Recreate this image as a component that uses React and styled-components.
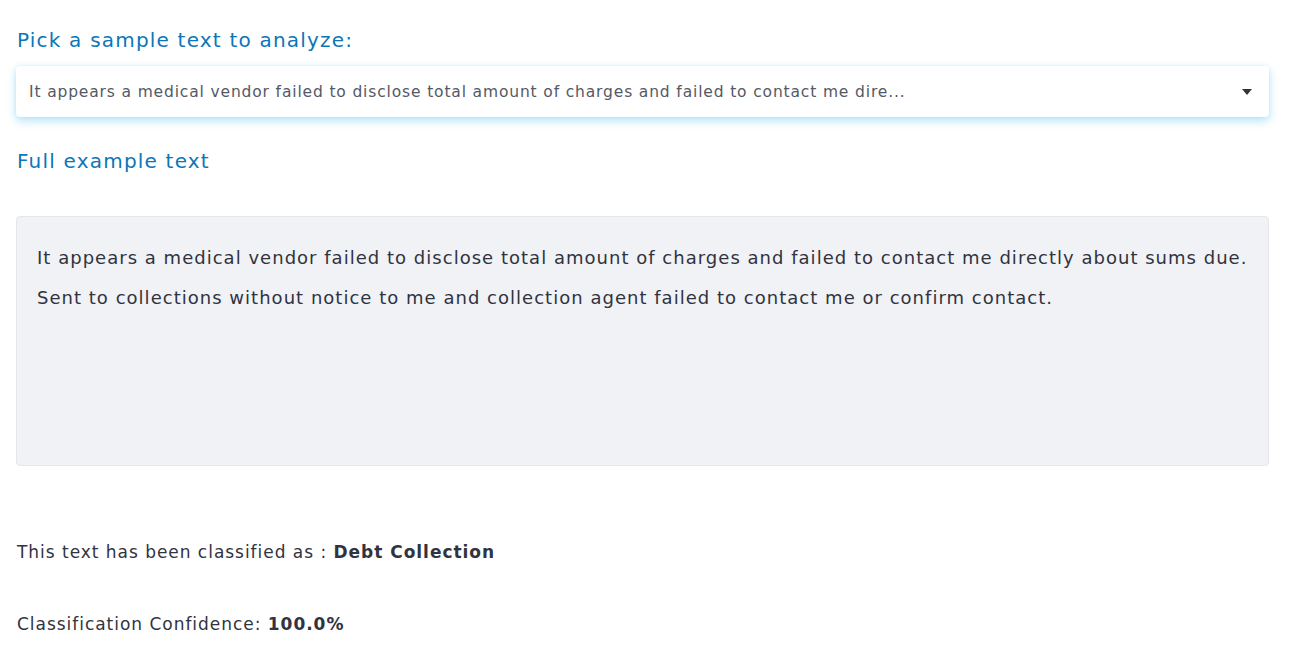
import React from "react";
import styled, { createGlobalStyle } from "styled-components";

const Global = createGlobalStyle`
  html, body { margin: 0; padding: 0; background: #ffffff; }
  body { font-family: "DejaVu Sans", "Noto Sans", sans-serif; color: #31333f; }
`;

const Page = styled.main`
  display: flex;
  flex-direction: column;
  padding: 26px 37px 0 16px;
`;

const Heading = styled.h3`
  margin: 0 0 0 1px;
  font-size: 20px;
  font-weight: 400;
  letter-spacing: 1.2px;
  line-height: 28px;
  color: #0b76b8;
`;

const SelectBox = styled.div`
  margin-top: 12px;
  height: 51px;
  display: flex;
  align-items: center;
  justify-content: space-between;
  padding: 0 17px 0 13px;
  background: #ffffff;
  border-radius: 4px;
  box-shadow: 0 4px 10px rgba(30, 170, 235, 0.32), 0 0 4px rgba(30, 170, 235, 0.12);
  box-sizing: border-box;
`;

const SelectValue = styled.span`
  font-size: 15.5px;
  letter-spacing: 0.85px;
  color: #555966;
  white-space: nowrap;
`;

const Caret = styled.svg`
  width: 10px;
  height: 6px;
  flex: none;
`;

const SubHeading = styled(Heading)`
  margin-top: 30px;
`;

const TextPanel = styled.div`
  margin-top: 41px;
  height: 250px;
  box-sizing: border-box;
  padding: 21px 20px 0 20px;
  background: #f0f2f6;
  border: 1px solid #e4e6eb;
  border-radius: 4px;
  font-size: 18px;
  letter-spacing: 1.02px;
  line-height: 40px;
  color: #31333f;
`;

const Line = styled.p`
  margin: 0;
  white-space: nowrap;
`;

const Result = styled.p`
  margin: ${(p) => p.$top}px 0 0 1px;
  font-size: 17px;
  letter-spacing: 0.97px;
  line-height: 24px;
  color: #31333f;
`;

export default function App() {
  return (
    <>
      <Global />
      <Page>
        <Heading>Pick a sample text to analyze:</Heading>
        <SelectBox>
          <SelectValue>
            It appears a medical vendor failed to disclose total amount of charges and failed to contact me dire...
          </SelectValue>
          <Caret viewBox="0 0 10 6">
            <path d="M0 0 L10 0 L5 6 Z" fill="#31333f" />
          </Caret>
        </SelectBox>
        <SubHeading>Full example text</SubHeading>
        <TextPanel>
          <Line>
            It appears a medical vendor failed to disclose total amount of charges and failed to contact me directly about sums due.
          </Line>
          <Line>
            Sent to collections without notice to me and collection agent failed to contact me or confirm contact.
          </Line>
        </TextPanel>
        <Result $top={74}>
          This text has been classified as : <b>Debt Collection</b>
        </Result>
        <Result $top={48}>
          Classification Confidence: <b>100.0%</b>
        </Result>
      </Page>
    </>
  );
}
